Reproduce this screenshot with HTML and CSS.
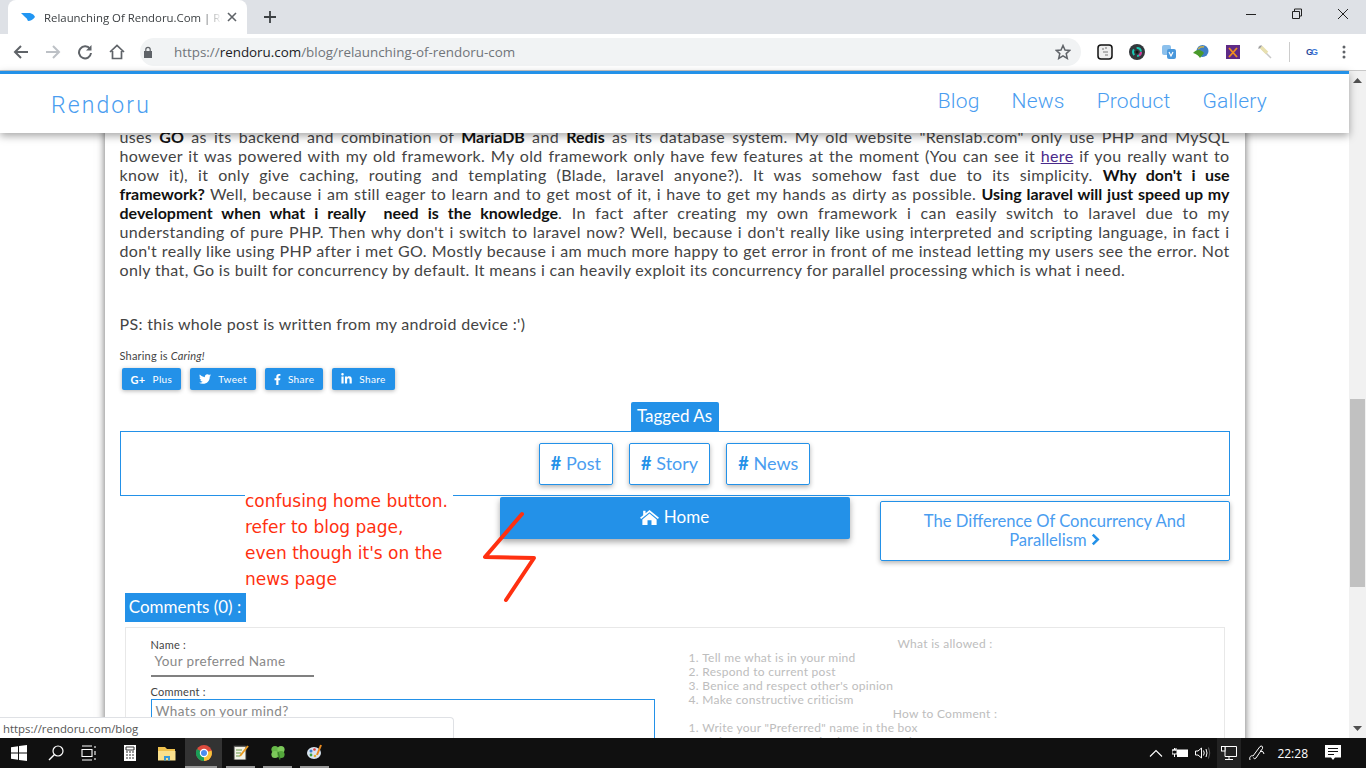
FILE: index.html
```html
<!DOCTYPE html>
<html lang="en">
  <head>
    <meta charset="UTF-8" />
    <title>Relaunching Of Rendoru.Com</title>
    <link rel="stylesheet" href="styles.css">
  </head>
  <body>
    <header class="tabstrip">
      <div class="tab">
        <svg class="favicon" viewBox="0 0 14 10" width="14" height="10"><path d="M0 1 L9 1 Q13 2 14 5 Q11 9 7 9 Q6 6 4 5 Q2 3 0 1Z" fill="#2196f3"/></svg>
        <span class="tab-title">Relaunching Of Rendoru.Com | Rendoru</span>
        <svg viewBox="0 0 10 10" width="10" height="10"><path d="M1 1 L9 9 M9 1 L1 9" stroke="#5f6368" stroke-width="1.6"/></svg>
      </div>
      <svg class="newtab" viewBox="0 0 12 12" width="12" height="12"><path d="M6 0 V12 M0 6 H12" stroke="#3c4043" stroke-width="1.8"/></svg>
      <div class="winbtns">
        <svg viewBox="0 0 46 28" width="46" height="28"><path d="M18 14.5 H28" stroke="#222"/></svg>
        <svg viewBox="0 0 46 28" width="46" height="28"><path d="M18.5 11.5 h7 v7 h-7z M20.5 11 v-2 h7 v7 h-2" fill="none" stroke="#222"/></svg>
        <svg viewBox="0 0 46 28" width="46" height="28"><path d="M18 9 L28 19 M28 9 L18 19" stroke="#222"/></svg>
      </div>
    </header>

    <div class="toolbar">
      <span class="tool"><svg viewBox="0 0 16 16" width="16" height="16"><path d="M15 8 H2 M8 2 L2 8 L8 14" fill="none" stroke="#5f6368" stroke-width="2"/></svg></span>
      <span class="tool"><svg viewBox="0 0 16 16" width="16" height="16"><path d="M1 8 H14 M8 2 L14 8 L8 14" fill="none" stroke="#bdc1c6" stroke-width="2"/></svg></span>
      <span class="tool"><svg viewBox="0 0 16 16" width="16" height="16"><path d="M13 5 A6 6 0 1 0 14 9" fill="none" stroke="#5f6368" stroke-width="2"/><path d="M14.5 1 V6.5 H9z" fill="#5f6368"/></svg></span>
      <span class="tool"><svg viewBox="0 0 16 16" width="16" height="16"><path d="M1 8 L8 1.5 L15 8 M3.5 7 V14.5 H12.5 V7" fill="none" stroke="#5f6368" stroke-width="1.7"/></svg></span>
      <div class="omnibox">
        <svg class="lock" viewBox="0 0 10 12" width="10" height="12"><path d="M1 5 H9 V12 H1z" fill="#5f6368"/><path d="M2.8 5 V3.5 a2.2 2.2 0 0 1 4.4 0 V5" fill="none" stroke="#5f6368" stroke-width="1.2"/></svg>
        <span class="url">https://<b>rendoru.com</b>/blog/relaunching-of-rendoru-com</span>
        <svg class="star" viewBox="0 0 16 16" width="16" height="16"><path d="M8 1.5 L10 6 L14.8 6.4 L11.2 9.6 L12.3 14.4 L8 11.9 L3.7 14.4 L4.8 9.6 L1.2 6.4 L6 6z" fill="none" stroke="#5f6368" stroke-width="1.5"/></svg>
      </div>
      <div class="exts">
        <span class="tool"><svg viewBox="0 0 16 16" width="16" height="16"><rect x="1" y="1" width="14" height="14" rx="3" fill="#eee" stroke="#111" stroke-width="1.5"/><path d="M5 5 h2 M8 4 h2 M6 8 h5 M8 11 h3" stroke="#777" stroke-width="1.2"/></svg></span>
        <span class="tool"><svg viewBox="0 0 16 16" width="16" height="16"><circle cx="8" cy="8" r="8" fill="#33373b"/><circle cx="8" cy="8" r="4" fill="none" stroke="#19c8b4" stroke-width="2" stroke-dasharray="6 3"/><circle cx="8" cy="8" r="4" fill="none" stroke="#e0309a" stroke-width="2" stroke-dasharray="4 21"/><circle cx="8" cy="8" r="1.5" fill="#111"/></svg></span>
        <span class="tool"><svg viewBox="0 0 16 16" width="16" height="16"><rect x="1" y="1" width="9" height="10" rx="2" fill="#8cc0ec"/><rect x="6" y="5" width="9" height="10" rx="2" fill="#4a98dc"/><path d="M8 8 l2 4 l2 -4" fill="none" stroke="#fff" stroke-width="1.2"/></svg></span>
        <span class="tool"><svg viewBox="0 0 16 16" width="16" height="16"><circle cx="9.5" cy="7" r="6" fill="#3f7fc4"/><path d="M0 9 C4 4 9 6 11 9 L7 14 C5 11 3 10 0 9Z" fill="#4a9a2a"/><path d="M5 5 Q8 2 11 3" stroke="#c9b04a" stroke-width="1.5" fill="none"/></svg></span>
        <span class="tool"><svg viewBox="0 0 16 16" width="16" height="16"><rect x="1" y="1" width="14" height="14" fill="#5e2a86"/><path d="M4 4 L12 13 M12 4 L4 13" stroke="#f09020" stroke-width="1.8"/></svg></span>
        <span class="tool"><svg viewBox="0 0 16 16" width="16" height="16"><path d="M2 2 L14 14" stroke="#c8c8c8" stroke-width="1.5"/><path d="M4 3 L10 9" stroke="#e8e0b0" stroke-width="3.5"/><path d="M1.5 4.5 L4.5 1.5" stroke="#999" stroke-width="1.2"/></svg></span>
      </div>
      <span class="tool-sep"></span>
      <span class="tool g-ext">G<i>G</i></span>
      <span class="tool"><svg viewBox="0 0 4 14" width="4" height="14"><circle cx="2" cy="2" r="1.5" fill="#5f6368"/><circle cx="2" cy="7" r="1.5" fill="#5f6368"/><circle cx="2" cy="12" r="1.5" fill="#5f6368"/></svg></span>
    </div>

    <div class="viewport">
      <div class="site">
        <nav class="sitenav">
          <a class="brand">Rendoru</a>
          <div class="navlinks">
            <a>Blog</a>
            <a>News</a>
            <a>Product</a>
            <a>Gallery</a>
          </div>
        </nav>
        <div class="scroller">
          <main class="container">
            <div class="post">
              <span class="ln">uses <b>GO</b> as its backend and combination of <b>MariaDB</b> and <b>Redis</b> as its database system. My old website "Renslab.com" only use PHP and MySQL</span>
              <span class="ln">however it was powered with my old framework. My old framework only have few features at the moment (You can see it <a class="inline-link">here</a> if you really want to</span>
              <span class="ln">know it), it only give caching, routing and templating (Blade, laravel anyone?). It was somehow fast due to its simplicity. <b>Why don't i use</b></span>
              <span class="ln"><b>framework?</b> Well, because i am still eager to learn and to get most of it, i have to get my hands as dirty as possible. <b>Using laravel will just speed up my</b></span>
              <span class="ln"><b>development when what i really &nbsp;need is the knowledge</b>. In fact after creating my own framework i can easily switch to laravel due to my</span>
              <span class="ln">understanding of pure PHP. Then why don't i switch to laravel now? Well, because i don't really like using interpreted and scripting language, in fact i</span>
              <span class="ln">don't really like using PHP after i met GO. Mostly because i am much more happy to get error in front of me instead letting my users see the error. Not</span>
              <span class="ln last">only that, Go is built for concurrency by default. It means i can heavily exploit its concurrency for parallel processing which is what i need.</span>
            </div>
            <p class="ps">PS: this whole post is written from my android device :')</p>

            <p class="sharing">Sharing is <em>Caring!</em></p>
            <div class="share-row">
              <a class="share"><b class="gplus">G+</b>Plus</a>
              <a class="share"><svg viewBox="0 0 512 512" width="12" height="12"><path d="M459.37 151.716c.325 4.548.325 9.097.325 13.645 0 138.72-105.583 298.558-298.558 298.558-59.452 0-114.68-17.219-161.137-47.106 8.447.974 16.568 1.299 25.34 1.299 49.055 0 94.213-16.568 130.274-44.832-46.132-.975-84.792-31.188-98.112-72.772 6.498.974 12.995 1.624 19.818 1.624 9.421 0 18.843-1.3 27.614-3.573-48.081-9.747-84.143-51.98-84.143-102.985v-1.299c13.969 7.797 30.214 12.67 47.431 13.319-28.264-18.843-46.781-51.005-46.781-87.391 0-19.492 5.197-37.36 14.294-52.954 51.655 63.675 129.3 105.258 216.365 109.807-1.624-7.797-2.599-15.918-2.599-24.04 0-57.828 46.782-104.934 104.934-104.934 30.213 0 57.502 12.67 76.67 33.137 23.715-4.548 46.456-13.32 66.599-25.34-7.798 24.366-24.366 44.833-46.132 57.827 21.117-2.273 41.584-8.122 60.426-16.243-14.292 20.791-32.161 39.308-52.628 54.253z" fill="#fff"/></svg>Tweet</a>
              <a class="share"><svg viewBox="0 0 320 512" width="7" height="11"><path d="M279.14 288l14.22-92.66h-88.91v-60.13c0-25.35 12.42-50.06 52.24-50.06h40.42V6.26S260.43 0 225.36 0c-73.22 0-121.08 44.38-121.08 124.72v70.62H22.89V288h81.39v224h100.17V288z" fill="#fff"/></svg>Share</a>
              <a class="share"><svg viewBox="0 0 448 512" width="11" height="12"><path d="M100.28 448H7.4V148.9h92.88zM53.79 108.1C24.09 108.1 0 83.5 0 53.8a53.79 53.79 0 0 1 107.58 0c0 29.7-24.1 54.3-53.79 54.3zM447.9 448h-92.68V302.4c0-34.7-.7-79.2-48.29-79.2-48.29 0-55.69 37.7-55.69 76.7V448h-92.78V148.9h89.08v40.8h1.3c12.4-23.5 42.69-48.3 87.88-48.3 94 0 111.28 61.9 111.28 142.3V448z" fill="#fff"/></svg>Share</a>
            </div>

            <div class="tagged">
              <h4 class="tagged-title">Tagged As</h4>
              <div class="tagged-box">
                <a class="tag"><b>#</b> Post</a>
                <a class="tag"><b>#</b> Story</a>
                <a class="tag"><b>#</b> News</a>
              </div>
            </div>

            <div class="pager">
              <span></span>
              <a class="pager-home"><svg viewBox="0 0 24 20" width="19" height="16"><path d="M12 1 L24 11 L22.5 12.5 L12 4 L1.5 12.5 L0 11 L4 7.7 V2 H7 V5.2z M12 5.500 L21 13 V20 H14.5 V14 H9.5 V20 H3 V13z" fill="#fff"/></svg> Home</a>
              <a class="pager-next">The Difference Of Concurrency And Parallelism <svg viewBox="0 0 10 14" width="9" height="13"><path d="M2 1.5 L7.5 7 L2 12.5" fill="none" stroke="#2391e8" stroke-width="2.8"/></svg></a>
            </div>

            <h4 class="comments-title">Comments (0) :</h4>
            <section class="comments">
              <form class="comment-form">
                <label class="field-label">Name :</label>
                <div class="name-input">Your preferred Name</div>
                <label class="field-label comment-label">Comment :</label>
                <div class="comment-input">Whats on your mind?</div>
              </form>
              <div class="rules">
                <p class="rules-title">What is allowed :</p>
                <ol>
                  <li>Tell me what is in your mind</li>
                  <li>Respond to current post</li>
                  <li>Benice and respect other's opinion</li>
                  <li>Make constructive criticism</li>
                </ol>
                <p class="rules-title">How to Comment :</p>
                <ol>
                  <li>Write your "Preferred" name in the box</li>
                  <li>Write your comment in the comment box</li>
                </ol>
              </div>
            </section>
          </main>
        </div>
      </div>

      <aside class="scrollbar">
        <svg viewBox="0 0 9 5" width="9" height="5"><path d="M4.5 0 L9 5 H0z" fill="#505050"/></svg>
        <div class="scroll-track"><div class="scroll-thumb"></div></div>
        <svg viewBox="0 0 9 5" width="9" height="5"><path d="M4.5 5 L9 0 H0z" fill="#505050"/></svg>
      </aside>

      <div class="note">confusing home button.<br>refer to blog page,<br>even though it's on the<br>news page</div>
      <svg class="scribble" viewBox="0 0 60 94" width="60" height="94"><path d="M43 4 L6 47 L55 48 L27 90" fill="none" stroke="#ff3010" stroke-width="4" stroke-linecap="round" stroke-linejoin="round"/></svg>
      <div class="status">https://rendoru.com/blog</div>
    </div>

    <footer class="taskbar">
      <span class="task"><svg viewBox="0 0 16 16" width="16" height="16"><path d="M0 2.3 L7 1.3 V7.5 H0z M8 1.1 L16 0 V7.5 H8z M0 8.5 H7 V14.7 L0 13.7z M8 8.5 H16 V16 L8 14.9z" fill="#fff"/></svg></span>
      <span class="task"><svg viewBox="0 0 16 16" width="16" height="16"><circle cx="10" cy="6" r="5" fill="none" stroke="#fff" stroke-width="1.2"/><path d="M6.5 9.5 L1 15" stroke="#fff" stroke-width="1.4"/></svg></span>
      <span class="task"><svg class="taskview" viewBox="0 0 16 16" width="16" height="16"><path d="M1 4.5 H11 V11.5 H1z M1 1 H11 M1 15 H11 M14 1 V3 M14 6 V10 M14 13 V15" fill="none" stroke="#fff" stroke-width="1.1"/></svg></span>
      <span class="task"><svg viewBox="0 0 12 16" width="12" height="16"><rect width="12" height="16" fill="#fff"/><path d="M2 2 H10 V5 H2z M2 7 h2 M5 7 h2 M8 7 h2 M2 10 h2 M5 10 h2 M8 10 h2 M2 13 h2 M5 13 h2 M8 13 h2" stroke="#333" fill="none"/></svg></span>
      <span class="task"><svg viewBox="0 0 18 15" width="18" height="15"><path d="M0 1 H7 L9 3 H17 V14 H0z" fill="#f0c24e"/><path d="M0 5 H17.5 V14.5 H0z" fill="#fbe08c"/><path d="M6 14.5 V10 H12 V14.5 H10 V12 H8 V14.5z" fill="#3a9ad9"/></svg></span>
      <span class="task active"><svg viewBox="0 0 16 16" width="16" height="16"><circle cx="8" cy="8" r="8" fill="#dd4b3e"/><path d="M8 8 L15.5 5.5 A8 8 0 0 1 8 16z" fill="#f5c33b"/><path d="M8 8 L8 16 A8 8 0 0 1 1 4z" fill="#1a9d57"/><circle cx="8" cy="8" r="3.6" fill="#4a8cf0" stroke="#fff" stroke-width="1.2"/></svg></span>
      <span class="task running"><svg viewBox="0 0 16 16" width="16" height="16"><rect x="1" y="2" width="12" height="14" fill="#f4f4e8" stroke="#333"/><path d="M3 1 V3 M5 1 V3 M7 1 V3 M9 1 V3 M11 1 V3" stroke="#333"/><path d="M3 6 H9 M3 9 H8 M3 12 H7" stroke="#6a9a4a"/><path d="M7 12 L15 2" stroke="#e89a20" stroke-width="2"/></svg></span>
      <span class="task running"><svg viewBox="0 0 16 16" width="16" height="16"><circle cx="5" cy="5.5" r="3.6" fill="#66b848"/><circle cx="11" cy="5.5" r="3.6" fill="#7cc95a"/><circle cx="5" cy="10.5" r="3.6" fill="#7cc95a"/><circle cx="11" cy="10.5" r="3.6" fill="#55a83c"/><path d="M8 8 L10 15.5" stroke="#3a8028" stroke-width="1.3"/></svg></span>
      <span class="task running"><svg viewBox="0 0 16 16" width="16" height="16"><ellipse cx="7" cy="9" rx="7" ry="6" fill="#d8e4f0"/><circle cx="4" cy="7" r="1.5" fill="#3a80d0"/><circle cx="7.5" cy="5.5" r="1.3" fill="#e04040"/><circle cx="4" cy="11" r="1.4" fill="#40a040"/><circle cx="8" cy="12" r="1.3" fill="#e0b030"/><path d="M10 11 L14 1" stroke="#e88a20" stroke-width="2"/></svg></span>

      <div class="tray">
        <svg class="tray-caret" viewBox="0 0 14 8" width="14" height="8"><path d="M1 7.5 L7 1.5 L13 7.5" fill="none" stroke="#fff" stroke-width="1.1"/></svg>
        <svg viewBox="0 0 17 12" width="17" height="12"><path d="M0.5 3 h2 v-2 M3 3 h1 v-2 M0 3 H5 V7 H0z M2.5 7 V10" stroke="#fff" fill="none"/><rect x="5" y="2.5" width="11" height="7.5" fill="#fff"/></svg>
        <svg viewBox="0 0 16 12" width="16" height="12"><path d="M0.5 4 H3 L6.5 1 V11 L3 8 H0.5z M8.5 3.5 Q10 6 8.5 8.5 M11 2 Q13 6 11 10" fill="none" stroke="#fff"/><path d="M13.5 0.5 Q16 6 13.5 11.5" fill="none" stroke="#666"/></svg>
        <span class="tray-net"><svg viewBox="0 0 16 14" width="16" height="14"><path d="M0.5 0.5 H15.5 V10.5 H4 M4 0.5 V10.5 M8 10.5 V13.5 M4 13.5 H12" fill="none" stroke="#fff"/><rect x="0.5" y="0.5" width="3.5" height="4.5" fill="#111" stroke="#fff"/></svg></span>
        <svg class="tray-pen" viewBox="0 0 16 16" width="16" height="16"><path d="M1 15 C0 12 2 10 4 11 L11 1.5 Q14 0 13.5 3.5 L7 13 Q5 15 4.5 12.5 M11 6 Q15 6 15 9" fill="none" stroke="#fff"/></svg>
        <span class="clock">22:28</span>
        <svg viewBox="0 0 16 16" width="16" height="16"><path d="M0 0 H16 V12.5 H10 L8 15 L6 12.5 H0z" fill="#fff"/><path d="M3 3.5 H13 M3 6.5 H13 M3 9.5 H9" stroke="#111"/></svg>
      </div>
    </footer>
  </body>
</html>
```

FILE: styles.css
```css
html, body {
  margin: 0;
  height: 768px;
  overflow: hidden;
}
body {
  display: flex;
  flex-direction: column;
  font-family: "Lato", "Liberation Sans", sans-serif;
  color: #333;
  background: #fff;
}
a {
  text-decoration: none;
}

/* browser top */
.tabstrip {
  height: 34px;
  background: #dee1e6;
  display: flex;
  align-items: flex-end;
  padding-left: 8px;
}
.tab {
  width: 239px;
  height: 34px;
  box-sizing: border-box;
  background: #fff;
  border-radius: 8px 8px 0 0;
  display: flex;
  align-items: center;
  padding: 0 10px 0 13px;
  font: 11.4px "Open Sans", "Liberation Sans", sans-serif;
  color: #3c4043;
}
.tab-title {
  flex: 1;
  margin: 0 5px 0 9px;
  white-space: nowrap;
  overflow: hidden;
  -webkit-mask-image: linear-gradient(to right, #000 88%, transparent 100%);
}
.newtab {
  margin: 0 0 11px 17px;
}
.winbtns {
  margin-left: auto;
  display: flex;
  align-self: flex-start;
}
.toolbar {
  height: 36px;
  background: #fff;
  border-bottom: 1px solid #c8c8c8;
  display: flex;
  align-items: center;
  padding-left: 5px;
}
.tool {
  width: 32px;
  height: 28px;
  display: flex;
  align-items: center;
  justify-content: center;
}
.omnibox {
  width: 941px;
  height: 28px;
  margin-left: 7px;
  background: #f1f3f4;
  border-radius: 14px;
  display: flex;
  align-items: center;
  padding: 0 10px 0 3px;
  box-sizing: border-box;
}
.lock {
  flex: none;
  margin-right: 21px;
}
.url {
  font: 13.4px "Open Sans", "Liberation Sans", sans-serif;
  color: #70757a;
}
.url b {
  font-weight: 400;
  color: #202124;
}
.star {
  margin-left: auto;
}
.exts {
  display: flex;
  margin-left: 8px;
}
.tool-sep {
  width: 1px;
  height: 20px;
  background: #ccc;
  margin: 0 6px 0 8px;
}
.g-ext {
  font: bold 9px "Liberation Sans", sans-serif;
  color: #2a4a9a;
}
.g-ext i {
  font-style: normal;
  color: #3c78d8;
  margin-left: -2px;
}

/* page */
.viewport {
  flex: 1;
  min-height: 0;
  display: flex;
  position: relative;
}
.site {
  flex: 1;
  min-width: 0;
  display: flex;
  flex-direction: column;
}
.sitenav {
  position: relative;
  z-index: 2;
  height: 62px;
  box-sizing: border-box;
  border-top: 3px solid #2391e8;
  background: #fff;
  box-shadow: 0 3px 8px rgba(0, 0, 0, .35);
  display: flex;
  align-items: center;
  justify-content: space-between;
  padding: 0 82px 5px 51px;
  font-family: "Roboto", sans-serif;
  font-weight: 300;
  font-size: 21px;
  letter-spacing: .2px;
  color: #4a9df0;
}
.brand {
  margin-top: 8px;
  font-size: 23px;
  letter-spacing: 2.1px;
}
.navlinks {
  display: flex;
  gap: 32px;
}
.scroller {
  flex: 1;
  min-height: 0;
  overflow: hidden;
}
.container {
  width: 1110px;
  height: 900px;
  margin: -7px auto 0;
  padding: 0 15px;
  background: #fff;
  box-shadow: 0 0 8px rgba(0, 0, 0, .6);
}
.post {
  font-size: 16px;
  line-height: 19px;
  letter-spacing: .35px;
  color: #444;
  padding-top: 1px;
}
.ln {
  display: block;
  text-align: justify;
  text-align-last: justify;
  white-space: nowrap;
}
.ln.last {
  text-align-last: left;
}
.post b {
  color: #111;
  font-weight: 700;
  letter-spacing: 0;
}
.inline-link {
  color: #4a2a8a;
  text-decoration: underline;
}
.ps {
  margin: 35px 0 0;
  font-size: 16px;
  line-height: 19px;
  letter-spacing: .32px;
  color: #444;
}
.sharing {
  margin: 15px 0 0;
  font-size: 11px;
  line-height: 16px;
  letter-spacing: .2px;
  color: #444;
}
.share-row {
  display: flex;
  gap: 9px;
  margin: 4px 0 0 2px;
}
.share {
  height: 22px;
  padding: 0 9px;
  display: flex;
  align-items: center;
  gap: 7px;
  background: #2391e8;
  color: #fff;
  font-size: 10px;
  letter-spacing: .35px;
  border-radius: 2px;
  box-shadow: 0 1px 4px rgba(0, 0, 0, .3);
}
.gplus {
  font-size: 11px;
}

.tagged {
  margin-top: 12px;
  text-align: center;
}
.tagged-title {
  display: inline-block;
  margin: 0;
  width: 88px;
  height: 29px;
  line-height: 27px;
  background: #2391e8;
  color: #fff;
  font-size: 17px;
  font-weight: 400;
  border-radius: 2px 2px 0 0;
  vertical-align: bottom;
}
.tagged-box {
  height: 65px;
  box-sizing: border-box;
  border: 1px solid #2391e8;
  display: flex;
  justify-content: center;
  gap: 16px;
  padding-top: 11px;
}
.tag {
  height: 42px;
  box-sizing: border-box;
  padding: 0 11px 3px;
  display: flex;
  align-items: center;
  gap: 5px;
  border: 1px solid #2391e8;
  border-radius: 2px;
  box-shadow: 0 2px 5px rgba(0, 0, 0, .3);
  color: #4a9df0;
  font-size: 18px;
}
.tag b {
  color: #2391e8;
}

.pager {
  display: grid;
  grid-template-columns: 350px 350px 350px;
  gap: 30px;
  align-items: start;
  margin-top: 1px;
}
.pager-home {
  height: 42px;
  box-sizing: border-box;
  padding-bottom: 3px;
  background: #2391e8;
  color: #fff;
  font-size: 17px;
  display: flex;
  align-items: center;
  justify-content: center;
  gap: 5px;
  border-radius: 2px;
  box-shadow: 0 3px 6px rgba(0, 0, 0, .35);
}
.pager-next {
  margin-top: 4px;
  height: 60px;
  box-sizing: border-box;
  padding: 10px 30px;
  border: 1px solid #2391e8;
  border-radius: 2px;
  box-shadow: 0 2px 5px rgba(0, 0, 0, .3);
  color: #4a9df0;
  font-size: 16.6px;
  line-height: 19px;
  text-align: center;
}
.comments-title {
  margin: 32px 0 0 5px;
  width: 121px;
  height: 29px;
  line-height: 27px;
  background: #2391e8;
  color: #fff;
  font-size: 17px;
  font-weight: 400;
  text-align: center;
}
.comments {
  margin: 5px 5px 0;
  height: 200px;
  border: 1px solid #e8e8e8;
  display: grid;
  grid-template-columns: 541px 1fr;
}
.comment-form {
  padding: 10px 0 0 25px;
}
.field-label {
  display: block;
  font-size: 11px;
  line-height: 14px;
  letter-spacing: .25px;
  color: #444;
}
.name-input {
  width: 159px;
  height: 23px;
  line-height: 19px;
  padding-left: 4px;
  border-bottom: 2px solid #808080;
  font-size: 13.5px;
  letter-spacing: .37px;
  color: #888;
}
.comment-label {
  margin-top: 8px;
}
.comment-input {
  width: 494px;
  height: 100px;
  padding: 3px 4px;
  border: 1px solid #2391e8;
  font-size: 13.5px;
  letter-spacing: .37px;
  color: #888;
}
.rules {
  padding-top: 9px;
  font-size: 12px;
  line-height: 14px;
  letter-spacing: .28px;
  color: #bdbdbd;
}
.rules-title {
  margin: 0;
  text-align: center;
}
.rules ol {
  margin: 0;
  padding-left: 22px;
  list-style-position: inside;
}

.scrollbar {
  width: 17px;
  background: #f1f1f1;
  display: flex;
  flex-direction: column;
  align-items: center;
  padding: 7px 0;
  box-sizing: border-box;
}
.scroll-track {
  flex: 1;
  width: 100%;
  padding-top: 316px;
  box-sizing: border-box;
}
.scroll-thumb {
  width: 15px;
  height: 188px;
  margin: 0 auto;
  background: #c1c1c1;
}

/* over the page */
.note {
  position: absolute;
  z-index: 3;
  left: 245px;
  top: 417px;
  width: 208px;
  height: 104px;
  background: #fff;
  font-family: "Comic Sans MS", "DejaVu Sans", cursive;
  font-size: 17px;
  line-height: 26px;
  color: #ff3010;
  white-space: nowrap;
}
.scribble {
  position: absolute;
  z-index: 3;
  left: 479px;
  top: 439px;
}
.status {
  position: absolute;
  z-index: 3;
  left: 0;
  bottom: 0;
  width: 450px;
  height: 20px;
  padding-left: 3px;
  background: #fff;
  border: 1px solid #dfe1e5;
  border-width: 1px 1px 0 0;
  border-radius: 0 4px 0 0;
  font: 11.4px/21px "Open Sans", "Liberation Sans", sans-serif;
  color: #555;
}

/* windows taskbar */
.taskbar {
  height: 30px;
  background: #101010;
  display: flex;
  align-items: center;
}
.task {
  width: 37px;
  height: 30px;
  box-sizing: border-box;
  display: flex;
  align-items: center;
  justify-content: center;
  flex: none;
}
.taskview {
  margin-right: 8px;
}
.task.running {
  width: 29px;
  margin: 0 4px;
  border-bottom: 2px solid #999;
}
.task.active {
  background: linear-gradient(#999, #999) 0 100% / 32px 2px no-repeat, #333;
}
.tray {
  margin-left: auto;
  display: flex;
  align-items: center;
  gap: 6px;
  padding-right: 25px;
  color: #fff;
  font: 12px "Open Sans", "Liberation Sans", sans-serif;
}
.tray-caret {
  margin-right: 3px;
}
.tray-net {
  width: 24px;
  height: 30px;
  background: #222;
  display: flex;
  align-items: center;
  justify-content: center;
}
.tray-pen {
  margin-left: 2px;
}
.clock {
  margin: 0 11px 0 6px;
}
```
